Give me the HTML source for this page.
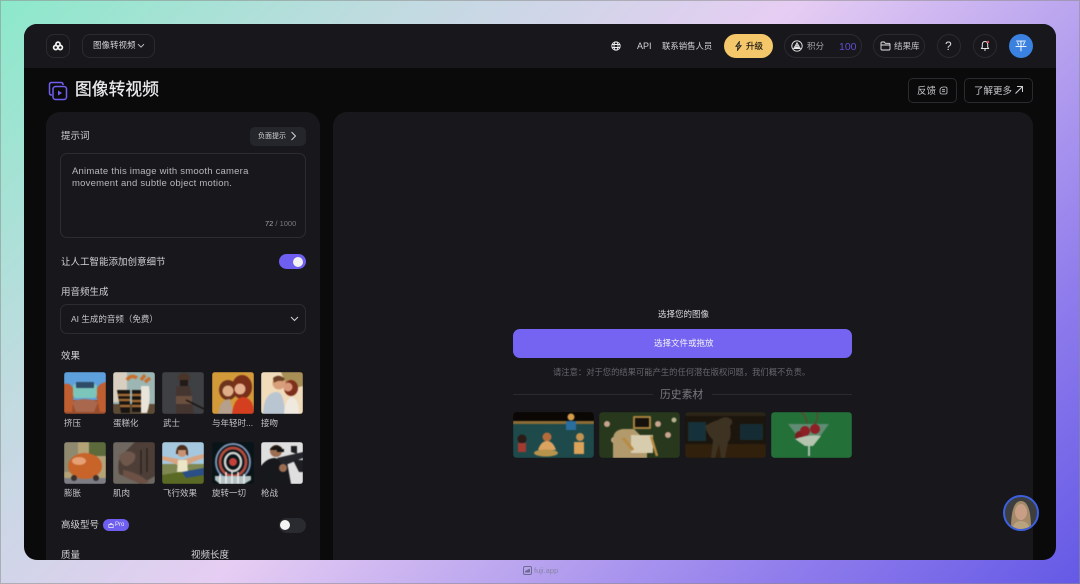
<!DOCTYPE html>
<html><head><meta charset="utf-8">
<style>
*{box-sizing:border-box;margin:0;padding:0}
html,body{width:1080px;height:584px;overflow:hidden}
body{position:relative;font-family:"Liberation Sans","Noto Sans CJK SC",sans-serif;background:linear-gradient(135deg,#8ce9ca 0%,#c0dbe0 24%,#e6cdf3 48%,#baa5ef 65%,#8f7cec 82%,#6459e6 100%)}
body:after{content:"";position:absolute;left:0;top:0;width:1080px;height:584px;box-shadow:inset 0 0 0 1px rgba(140,140,140,.55)}
.a{position:absolute;white-space:nowrap}
#f{position:absolute;left:24px;top:24px;width:1032px;height:536px;border-radius:13px;background:#0a0a0b;overflow:hidden}
.t{position:absolute;white-space:nowrap;line-height:1;color:#d4d4d6}
.b{position:absolute;border:1px solid #2a2a30;border-radius:8px}
.p{position:absolute;border:1px solid #2c2c33;border-radius:14px}
.th{position:absolute;width:42px;height:42px;border-radius:3px;overflow:hidden}
.th svg,.h svg{display:block;width:100%;height:100%;filter:blur(.45px)}
.h{position:absolute;top:388px;width:81px;height:46px;border-radius:4px;overflow:hidden}
.l{font-size:8.5px;color:#c4c4c8}
</style></head><body>
<div id="f">
<div class="a" style="left:0;top:0;width:1032px;height:44px;background:#17171c"></div>
<div class="b" style="left:22px;top:10px;width:24px;height:24px"></div>
<svg class="a" style="left:28px;top:16px" width="12" height="12" viewBox="0 0 12 12"><g fill="none" stroke="#f2f2f2" stroke-width="1.700"><circle cx="6" cy="4.200" r="2.100"/><circle cx="3.700" cy="7.500" r="2.100"/><circle cx="8.300" cy="7.500" r="2.100"/></g></svg>
<div class="b" style="left:58px;top:10px;width:73px;height:24px"></div>
<div class="t" style="left:69px;top:17px;font-size:8.500px">图像转视频</div>
<svg class="a" style="left:113px;top:19px" width="8" height="6" viewBox="0 0 8 6"><path d="M1 1.200 4 4.200 7 1.200" fill="none" stroke="#d4d4d6" stroke-width=".8"/></svg>
<svg class="a" style="left:587px;top:17px" width="10" height="10" viewBox="0 0 10 10"><g fill="none" stroke="#eee" stroke-width=".9"><circle cx="5" cy="5" r="4.200"/><ellipse cx="5" cy="5" rx="2" ry="4.200"/><path d="M1 3.500H9M1 6.500H9"/></g></svg>
<div class="t" style="left:613px;top:17.500px;font-size:9px">API</div>
<div class="t" style="left:638px;top:17.500px;font-size:8.400px">联系销售人员</div>
<div class="a" style="left:700px;top:10px;width:49px;height:24px;border-radius:12px;background:#f3c76a"></div>
<svg class="a" style="left:710px;top:17px" width="9" height="10" viewBox="0 0 9 10"><path d="M5.300.8 2 5.300H4L3.500 9.200 7 4.700H5Z" fill="none" stroke="#222" stroke-width="1"/></svg>
<div class="t" style="left:722px;top:17.500px;font-size:8.500px;color:#2a2318;-webkit-text-stroke:.2px #2a2318">升级</div>
<div class="b" style="left:760px;top:10px;width:78px;height:24px;border-radius:12px"></div>
<svg class="a" style="left:767px;top:16px" width="12" height="12" viewBox="0 0 12 12"><g fill="none" stroke="#e8e8e8" stroke-width=".9"><circle cx="6" cy="6" r="5.200"/><path d="M6 2.800 9.300 8.500H2.700ZM6 5 7.500 7.500H4.500Z"/></g></svg>
<div class="t" style="left:783px;top:17.500px;font-size:8.500px;color:#a8a8ac">积分</div>
<div class="t" style="left:815px;top:17.500px;font-size:10.500px;color:#5f4fd0">100</div>
<div class="b" style="left:849px;top:10px;width:52px;height:24px;border-radius:12px"></div>
<svg class="a" style="left:856px;top:17px" width="11" height="10" viewBox="0 0 11 10"><path d="M1 2Q1 1 2 1H4.300L5.300 2.300H9Q10 2.300 10 3.300V8Q10 9 9 9H2Q1 9 1 8ZM1 4H10" fill="none" stroke="#e8e8e8" stroke-width=".9"/></svg>
<div class="t" style="left:870px;top:17.500px;font-size:8.500px;color:#c4c4c8">结果库</div>
<div class="b" style="left:913px;top:10px;width:24px;height:24px;border-radius:12px"></div>
<div class="t" style="left:921px;top:16px;font-size:12px;color:#ddd">?</div>
<div class="b" style="left:949px;top:10px;width:24px;height:24px;border-radius:12px"></div>
<svg class="a" style="left:955px;top:16px" width="12" height="12" viewBox="0 0 12 12"><path d="M6 1.500C4 1.500 3.300 3 3.300 4.500V7L2.500 8.500H9.500L8.700 7V4.500C8.700 3 8 1.500 6 1.500ZM5 10H7" fill="none" stroke="#e4e4e4" stroke-width="1"/><circle cx="9" cy="2" r="1.200" fill="#e5484d"/></svg>
<div class="a" style="left:985px;top:10px;width:24px;height:24px;border-radius:12px;background:#3b82e0"></div>
<div class="t" style="left:991px;top:16px;font-size:12px;color:#fff">平</div>

<svg class="a" style="left:24px;top:57px" width="20" height="20" viewBox="0 0 20 20"><g fill="none" stroke="#6f5ff0" stroke-width="1.500"><path d="M15 4V3.500Q15 1.500 13 1.500H3.500Q1.500 1.500 1.500 3.500V12Q1.500 14 3.500 14H4"/><rect x="5" y="5.500" width="13.500" height="13" rx="2.500"/></g><path d="M10 9.500 14 12 10 14.500Z" fill="#6f5ff0"/></svg>
<div class="t" style="left:51px;top:58px;font-size:16.800px;color:#ececee;-webkit-text-stroke:.25px #ececee">图像转视频</div>
<div class="b" style="left:884px;top:54px;width:49px;height:25px;border-radius:5px"></div>
<div class="t" style="left:893px;top:62.500px;font-size:9.500px;color:#c8c8cc">反馈</div>
<svg class="a" style="left:915px;top:62px" width="9" height="9" viewBox="0 0 9 9"><path d="M4.500 1H6.500Q8 1 8 2.500V6.500Q8 8 6.500 8H3Q1 8 1 6V4.500Q1 1 4.500 1ZM3 3.700H6M3 5.300H6" fill="none" stroke="#c8c8cc" stroke-width=".8"/></svg>
<div class="b" style="left:940px;top:54px;width:69px;height:25px;border-radius:5px"></div>
<div class="t" style="left:950px;top:62.500px;font-size:9.500px;color:#c8c8cc">了解更多</div>
<svg class="a" style="left:990px;top:61px" width="10" height="10" viewBox="0 0 10 10"><path d="M1.500 8.500 8.500 1.500M3 1.500H8.500V7" fill="none" stroke="#d0d0d4"/></svg>

<div class="a" style="left:22px;top:88px;width:274px;height:460px;border-radius:14px;background:#17171c"></div>
<div class="a" style="left:309px;top:88px;width:700px;height:460px;border-radius:14px;background:#17171c"></div>

<div class="t" style="left:37px;top:107.500px;font-size:9.500px">提示词</div>
<div class="a" style="left:226px;top:103px;width:56px;height:19px;border-radius:5px;background:#25262b"></div>
<div class="t" style="left:234px;top:109px;font-size:7px">负面提示</div>
<svg class="a" style="left:266px;top:107px" width="7" height="10" viewBox="0 0 7 10"><path d="M1.500 1 5.500 5 1.500 9" fill="none" stroke="#d4d4d6"/></svg>
<div class="p" style="left:36px;top:129px;width:246px;height:85px;border-radius:7px"></div>
<div class="t" style="left:48px;top:142px;font-size:9.500px;line-height:11.700px;letter-spacing:.22px;color:#b8b8bc">Animate this image with smooth camera<br>movement and subtle object motion.</div>
<div class="t" style="left:241px;top:195.500px;font-size:7.500px;color:#7a7a80"><span style="color:#a8a8ac">72</span> / 1000</div>
<div class="t" style="left:37px;top:233.500px;font-size:9.500px">让人工智能添加创意细节</div>
<div class="a" style="left:255px;top:230px;width:27px;height:15px;border-radius:8px;background:#6f5ff0"></div>
<div class="a" style="left:269px;top:232.500px;width:10px;height:10px;border-radius:5px;background:#f2f2f2"></div>
<div class="t" style="left:37px;top:263.500px;font-size:9.500px">用音频生成</div>
<div class="p" style="left:36px;top:280px;width:246px;height:30px;border-radius:7px"></div>
<div class="t" style="left:47px;top:291px;font-size:8.500px;color:#c4c4c8">AI 生成的音频（免费）</div>
<svg class="a" style="left:266px;top:292px" width="9" height="6" viewBox="0 0 9 6"><path d="M1 1 4.500 4.500 8 1" fill="none" stroke="#d4d4d6"/></svg>
<div class="t" style="left:37px;top:327.500px;font-size:9.500px">效果</div>

<div class="th" style="left:40px;top:348px"><svg viewBox="0 0 42 42"><rect width="42" height="42" fill="#5ea0dc"/><rect y="28" width="42" height="14" fill="#9a4e2c"/><path d="M0 12Q8 10 10 20 L8 40H0ZM42 10Q32 12 32 22L36 40H42Z" fill="#bf5e30"/><rect x="9" y="12" width="24" height="14" rx="3" fill="#7cc5bb"/><rect x="12" y="10" width="18" height="6" rx="1" fill="#2e4c68"/><path d="M8 30Q20 24 34 30L30 40H12Z" fill="#a9674e"/></svg></div>
<div class="th" style="left:89px;top:348px"><svg viewBox="0 0 42 42"><rect width="42" height="42" fill="#9cb6b4"/><rect width="14" height="30" fill="#d8cfc0"/><rect y="32" width="42" height="10" fill="#5e4b35"/><path d="M24 6Q18 2 14 8M28 8l4-5M32 10l5-4" stroke="#c77030" stroke-width="3.500" fill="none"/><path d="M4 18H17V41H8Z" fill="#191512"/><path d="M5 23H17M6 28H17M7 34H17" stroke="#a26a35" stroke-width="2.500"/><path d="M19 18H28V40H19Z" fill="#191512"/><path d="M19 23H28M19 29H28M19 34H28" stroke="#a26a35" stroke-width="2.500"/><path d="M28 14H36Q38 30 34 41H28Z" fill="#e8e4da"/></svg></div>
<div class="th" style="left:138px;top:348px"><svg viewBox="0 0 42 42"><rect width="42" height="42" fill="#3e4044"/><ellipse cx="22" cy="6" rx="6" ry="5" fill="#4a352a"/><rect x="18" y="8" width="8" height="6" fill="#221a17"/><path d="M14 14H28L30 28 32 42H14Z" fill="#453530"/><path d="M14 24H30V32H14Z" fill="#6a4f3f"/><path d="M24 28 42 37" stroke="#17130f" stroke-width="1.500"/></svg></div>
<div class="th" style="left:188px;top:348px"><svg viewBox="0 0 42 42"><rect width="42" height="42" fill="#d29a38"/><ellipse cx="16" cy="18" rx="9" ry="10" fill="#6e331c"/><ellipse cx="30" cy="15" rx="10" ry="12" fill="#7a2f18"/><circle cx="16" cy="19" r="5.500" fill="#dfae88"/><circle cx="28" cy="17" r="5.500" fill="#e4b08f"/><path d="M6 42Q8 27 18 27L22 42Z" fill="#b4a08c"/><path d="M20 42Q22 25 32 25 42 27 42 42Z" fill="#d4401f"/></svg></div>
<div class="th" style="left:237px;top:348px"><svg viewBox="0 0 42 42"><rect width="42" height="42" fill="#f0dbbb"/><path d="M20 0H42V14Q30 18 24 10Z" fill="#a88f55"/><circle cx="18" cy="11" r="6.500" fill="#d8a07a"/><path d="M12 6Q18 1 24 7L22 9Q16 8 13 11Z" fill="#6b4025"/><path d="M2 42Q3 20 16 20 23 20 24 42Z" fill="#b9c6d2"/><ellipse cx="30" cy="16" rx="7" ry="8" fill="#7d2f1c"/><circle cx="27" cy="15" r="4.500" fill="#d9987a"/><path d="M23 42Q24 27 31 25 38 27 38 42Z" fill="#efe9df"/></svg></div>

<div class="th" style="left:40px;top:418px"><svg viewBox="0 0 42 42"><rect width="42" height="42" fill="#b5a378"/><rect width="14" height="30" fill="#8f8a6f"/><rect x="25" width="17" height="14" fill="#5c6a3c"/><rect y="36" width="42" height="6" fill="#7d7d85"/><ellipse cx="21" cy="24" rx="17" ry="13" fill="#c8642a"/><ellipse cx="15" cy="19" rx="7" ry="4" fill="#e5a075"/><circle cx="10" cy="36" r="3" fill="#3a2f2a"/><circle cx="32" cy="36" r="3" fill="#3a2f2a"/></svg></div>
<div class="th" style="left:89px;top:418px"><svg viewBox="0 0 42 42"><rect width="42" height="42" fill="#6e6860"/><path d="M22 0H42V34L28 42 6 32Q4 20 8 14 16 6 22 0Z" fill="#4d3f38"/><path d="M6 14Q14 6 22 12 24 20 14 24 8 24 6 14Z" fill="#70574b"/><path d="M10 28Q24 30 36 40L30 42Q18 38 10 34Z" fill="#6d5145"/><path d="M28 8V32M34 6V30" stroke="#2c2320" stroke-width="1.500"/></svg></div>
<div class="th" style="left:138px;top:418px"><svg viewBox="0 0 42 42"><rect width="42" height="42" fill="#a6c8df"/><rect y="22" width="42" height="20" fill="#7f8752"/><path d="M0 33 42 26V42H0Z" fill="#5a6a24"/><path d="M0 14Q12 16 20 18 32 14 42 12V16Q30 20 24 24H17Q10 20 0 18Z" fill="#d8a583"/><circle cx="20" cy="10" r="5" fill="#c99272"/><path d="M14 12Q14 3 20 3 27 3 26 14L24 12V8H16V12Z" fill="#4b2d1b"/><path d="M16 18H25L26 30H15Z" fill="#ece6c8"/><path d="M20 30 42 26V33L24 36Z" fill="#2a4e86"/></svg></div>
<div class="th" style="left:188px;top:418px"><svg viewBox="0 0 42 42"><rect width="42" height="42" fill="#091418"/><g fill="none"><ellipse cx="21" cy="20" rx="17" ry="18" stroke="#7d93b5" stroke-width="2"/><ellipse cx="21" cy="20" rx="13" ry="14" stroke="#b14a3c" stroke-width="3"/><ellipse cx="21" cy="20" rx="8" ry="9" stroke="#cfd0cf" stroke-width="2.500"/></g><circle cx="21" cy="20" r="4" fill="#c4403a"/><path d="M3 34H39V38L32 42H8L3 38Z" fill="#b5c2c4"/><path d="M8 32V42M14 30V42M20 30V42M26 30V42M32 32V42" stroke="#e9eef0" stroke-width="1.500"/></svg></div>
<div class="th" style="left:237px;top:418px"><svg viewBox="0 0 42 42"><rect width="42" height="42" fill="#dfdfdf"/><path d="M0 42V24Q6 16 14 16L26 20 30 42Z" fill="#16181c"/><circle cx="15" cy="9" r="6" fill="#9c6e52"/><path d="M9 7Q15 0 21 6V8H9Z" fill="#1a1512"/><rect x="16" y="7" width="7" height="3" fill="#111"/><path d="M16 16 42 10V16L22 24Z" fill="#24262b"/><path d="M30 10V4H36V12ZM32 18 38 30H42V18Z" fill="#1d1f23"/><circle cx="22" cy="26" r="4" fill="#9c6e52"/></svg></div>

<div class="t l" style="left:40px;top:395px">挤压</div>
<div class="t l" style="left:89px;top:395px">蛋糕化</div>
<div class="t l" style="left:139px;top:395px">武士</div>
<div class="t l" style="left:188px;top:395px">与年轻时...</div>
<div class="t l" style="left:237px;top:395px">接吻</div>
<div class="t l" style="left:40px;top:465px">膨胀</div>
<div class="t l" style="left:89px;top:465px">肌肉</div>
<div class="t l" style="left:139px;top:465px">飞行效果</div>
<div class="t l" style="left:188px;top:465px">旋转一切</div>
<div class="t l" style="left:237px;top:465px">枪战</div>

<div class="t" style="left:37px;top:497px;font-size:9.500px">高级型号</div>
<div class="a" style="left:79px;top:495px;width:26px;height:12px;border-radius:6px;background:#6f5ff0"></div>
<div class="t" style="left:91px;top:498px;font-size:6px;color:#eee">Pro</div>
<svg class="a" style="left:84px;top:498px" width="6" height="6" viewBox="0 0 6 6"><path d="M.8 5.500V2.500H5.200V5.500ZM1.800 2.500Q3 0 4.200 2.500" fill="none" stroke="#eee" stroke-width=".7"/></svg>
<div class="a" style="left:255px;top:494px;width:27px;height:15px;border-radius:8px;background:#2a2b30"></div>
<div class="a" style="left:256px;top:496px;width:10px;height:10px;border-radius:5px;background:#f4f4f4"></div>
<div class="t" style="left:37px;top:527px;font-size:9.500px">质量</div>
<div class="t" style="left:167px;top:527px;font-size:9.500px">视频长度</div>

<div class="t" style="left:634px;top:285.500px;font-size:8.500px;color:#dcdcde">选择您的图像</div>
<div class="a" style="left:489px;top:305px;width:339px;height:29px;border-radius:7px;background:#7563f2"></div>
<div class="t" style="left:630px;top:315px;font-size:8.500px;color:#f2f2f6">选择文件或拖放</div>
<div class="t" style="left:529px;top:344px;font-size:8.300px;color:#66666c">请注意：对于您的结果可能产生的任何潜在版权问题，我们概不负责。</div>
<div class="a" style="left:489px;top:370px;width:140px;height:1px;background:#2a2a30"></div>
<div class="a" style="left:688px;top:370px;width:140px;height:1px;background:#2a2a30"></div>
<div class="t" style="left:636px;top:365.500px;font-size:10.800px;color:#7a7a80">历史素材</div>

<div class="h" style="left:489px"><svg viewBox="0 0 81 46" preserveAspectRatio="none"><rect width="81" height="46" fill="#1e4a4c"/><rect width="81" height="9" fill="#0a0704"/><rect y="9" width="81" height="3" fill="#8e6c35"/><circle cx="9" cy="27" r="4.500" fill="#2c1a15"/><rect x="5" y="31" width="8" height="9" fill="#a23a30"/><circle cx="34" cy="25" r="4.500" fill="#b56c3a"/><path d="M25 38Q28 29 34 29 40 29 43 38Z" fill="#dca360"/><ellipse cx="33" cy="41" rx="12" ry="3.500" fill="#b8934c"/><circle cx="67" cy="25" r="4" fill="#c49350"/><rect x="61" y="30" width="10" height="12" fill="#dba25a"/><circle cx="58" cy="5" r="3.500" fill="#d59c4b"/><rect x="53" y="9" width="10" height="9" fill="#2a6ea0"/></svg></div>
<div class="h" style="left:575px"><svg viewBox="0 0 81 46" preserveAspectRatio="none"><rect width="81" height="46" fill="#27381c"/><circle cx="8" cy="12" r="3" fill="#c9a48f"/><circle cx="15" cy="28" r="3" fill="#c9a48f"/><circle cx="59" cy="12" r="3" fill="#c9a48f"/><circle cx="69" cy="23" r="3" fill="#c9a48f"/><circle cx="75" cy="8" r="2.500" fill="#b8b090"/><path d="M14 46V28Q14 18 24 17H35L48 30V46Z" fill="#b29a6c"/><rect x="34" y="4" width="18" height="13" rx="1" fill="#a8823f"/><rect x="36" y="6" width="14" height="9" fill="#15110c"/><rect x="32" y="23" width="22" height="18" fill="#d8ccae"/><path d="M24 26 34 38" stroke="#b88b42" stroke-width="3"/><path d="M52 24 58 44" stroke="#b88b42" stroke-width="2.500"/></svg></div>
<div class="h" style="left:661px"><svg viewBox="0 0 81 46" preserveAspectRatio="none"><rect width="81" height="46" fill="#1b150d"/><rect width="81" height="4" fill="#2a2517"/><rect x="3" y="10" width="18" height="19" fill="#17313a"/><rect x="55" y="12" width="23" height="16" fill="#162c34"/><rect y="32" width="81" height="14" fill="#30200c"/><path d="M20 14Q26 10 33 8 40 3 46 7 49 10 45 14 47 26 43 30L40 46H36L34 32 30 46H26L28 28Q22 22 20 14Z" fill="#3e3322"/></svg></div>
<div class="h" style="left:747px"><svg viewBox="0 0 81 46" preserveAspectRatio="none"><rect width="81" height="46" fill="#247039"/><path d="M30 0Q36 4 36 15M46 0Q48 6 42 15" stroke="#6e3a2b" fill="none"/><path d="M17 12H58L42 34H34Z" fill="#5f8c72"/><circle cx="29" cy="24" r="5" fill="#7c1d20"/><circle cx="34" cy="19" r="5" fill="#8d2024"/><circle cx="44" cy="17" r="5" fill="#8d2024"/><path d="M24 27Q38 22 50 24L42 34H34Z" fill="#b4c4ae"/><rect x="37" y="34" width="2" height="10" fill="#a9c0aa"/></svg></div>

<div class="a" style="left:979px;top:471px;width:36px;height:36px;border-radius:18px;background:#3d3e40;border:2px solid #3c60e0;overflow:hidden"><svg width="32" height="32" viewBox="0 0 32 32"><path d="M6 32Q6 4 16 4 26 4 26 32Z" fill="#a48a68"/><ellipse cx="16" cy="15" rx="6" ry="8" fill="#c89f86"/><path d="M7 32Q9 24 16 24 23 24 25 32Z" fill="#b8a37e"/></svg></div>
</div>
<svg class="a" style="left:523px;top:566px" width="9" height="9" viewBox="0 0 9 9"><rect x=".5" y=".5" width="8" height="8" rx="1.500" fill="none" stroke="#6f6a92"/><path d="M2 5 7 2.500V6.500H2Z" fill="#6f6a92"/></svg>
<div class="a" style="left:534px;top:566px;font-size:7.500px;line-height:9px;color:#8884a8">fuji.app</div>
</body></html>
